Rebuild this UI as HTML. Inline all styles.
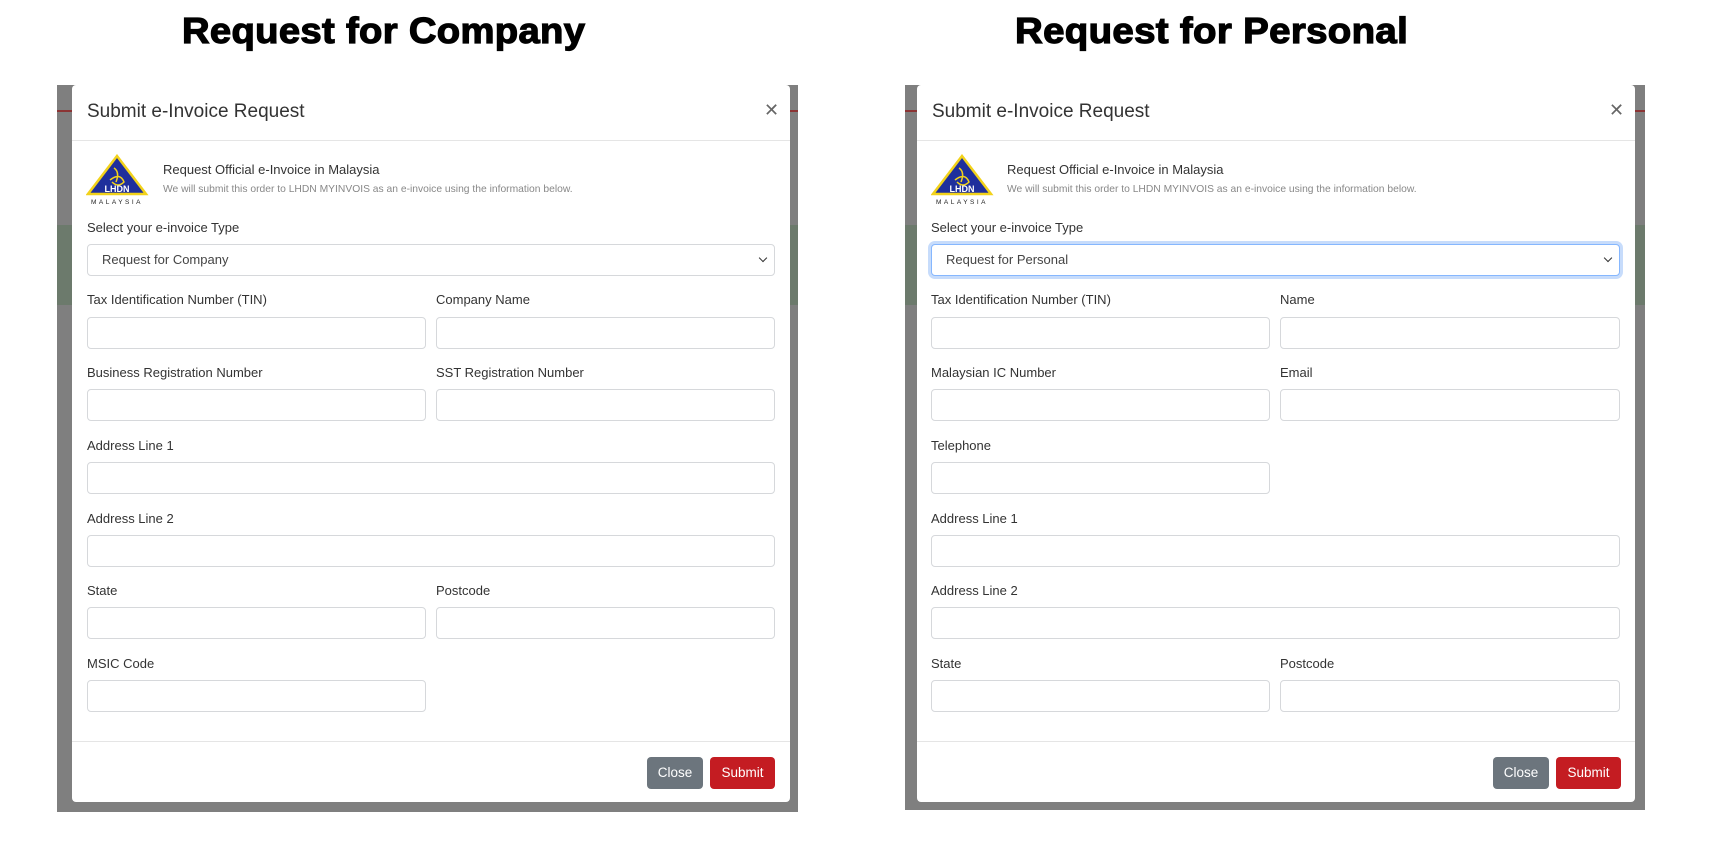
<!DOCTYPE html>
<html><head><meta charset="utf-8"><style>
*{box-sizing:border-box;margin:0;padding:0}
body{width:1711px;height:857px;background:#fff;position:relative;overflow:hidden;font-family:"Liberation Sans",Arial,sans-serif;color:#333}
.a{position:absolute}
.h{font-weight:bold;font-size:36px;color:#000;top:10px;white-space:nowrap;transform-origin:left top;letter-spacing:0.3px;-webkit-text-stroke:1.2px #000}
.bg{background:#7f7f7f}
.modal{background:#fff;border-radius:4px;top:85px;height:717px}
.t{font-size:19px;color:#333;top:101px}
.x{font-size:18px;color:#666;top:100px}
.hr{height:1px;background:#e5e5e5}
.lbl{font-size:13px;color:#333;white-space:nowrap}
.in{height:32px;border:1px solid #d6d8db;border-radius:4px;background:#fff}
.sub1{font-size:13px;color:#333;top:162px}
.sub2{font-size:10.3px;color:#888;top:184px}
.btn{height:32px;border-radius:4px;color:#fff;font-size:13.5px;text-align:center;line-height:32px;top:757px}
.c{background:#6c757d}.s{background:#c41c22}
.sel{font-size:13px;color:#444;padding-left:14px;line-height:30px}
.chev{position:absolute;right:8px;top:10px;width:6px;height:6px;border-right:1.6px solid #333;border-bottom:1.6px solid #333;transform:rotate(45deg)}
</style></head><body>

<div class="a h" style="left:182px;transform:scaleX(1.062)">Request for Company</div>
<div class="a h" style="left:1015px;transform:scaleX(1.068)">Request for Personal</div>

<!-- LEFT -->
<div class="a bg" style="left:57px;top:85px;width:741px;height:727px"></div>
<div class="a" style="left:57px;top:110px;width:741px;height:2px;background:#8b3434"></div>
<div class="a" style="left:57px;top:225px;width:741px;height:80px;background:#6c7a6c"></div>
<div class="a modal" style="left:72px;width:718px"></div>
<div class="a t" style="left:87px">Submit e-Invoice Request</div>
<div class="a x" style="left:764px">✕</div>
<div class="a hr" style="left:72px;top:140px;width:718px"></div>
<svg class="a" style="left:86px;top:154px" width="64" height="52" viewBox="0 0 64 52"><polygon points="31,2 60,40 2,40" fill="#1f2f9c" stroke="#f2d21b" stroke-width="2.5"/><path d="M28,14 q6,4 2,14 M24,26 q10,-8 14,2 q-6,6 -12,0" stroke="#f2d21b" stroke-width="1.5" fill="none"/><text x="31" y="38" font-size="9" fill="#fff" font-weight="bold" text-anchor="middle" font-family="Liberation Sans">LHDN</text><text x="31" y="50" font-size="6.5" fill="#222" text-anchor="middle" letter-spacing="2.5" font-family="Liberation Sans">MALAYSIA</text></svg>
<div class="a sub1" style="left:163px">Request Official e-Invoice in Malaysia</div>
<div class="a sub2" style="left:163px">We will submit this order to LHDN MYINVOIS as an e-invoice using the information below.</div>
<div class="a lbl" style="left:87px;top:220px">Select your e-invoice Type</div>
<div class="a in sel" style="left:87px;top:244px;width:688px">Request for Company<span class="chev"></span></div>
<div class="a lbl" style="left:87px;top:292px">Tax Identification Number (TIN)</div>
<div class="a lbl" style="left:436px;top:292px">Company Name</div>
<div class="a in" style="left:87px;top:317px;width:339px"></div>
<div class="a in" style="left:436px;top:317px;width:339px"></div>
<div class="a lbl" style="left:87px;top:365px">Business Registration Number</div>
<div class="a lbl" style="left:436px;top:365px">SST Registration Number</div>
<div class="a in" style="left:87px;top:389px;width:339px"></div>
<div class="a in" style="left:436px;top:389px;width:339px"></div>
<div class="a lbl" style="left:87px;top:438px">Address Line 1</div>
<div class="a in" style="left:87px;top:462px;width:688px"></div>
<div class="a lbl" style="left:87px;top:511px">Address Line 2</div>
<div class="a in" style="left:87px;top:535px;width:688px"></div>
<div class="a lbl" style="left:87px;top:583px">State</div>
<div class="a lbl" style="left:436px;top:583px">Postcode</div>
<div class="a in" style="left:87px;top:607px;width:339px"></div>
<div class="a in" style="left:436px;top:607px;width:339px"></div>
<div class="a lbl" style="left:87px;top:656px">MSIC Code</div>
<div class="a in" style="left:87px;top:680px;width:339px"></div>
<div class="a hr" style="left:72px;top:741px;width:718px"></div>
<div class="a btn c" style="left:647px;width:56px">Close</div>
<div class="a btn s" style="left:710px;width:65px">Submit</div>

<!-- RIGHT -->
<div class="a bg" style="left:905px;top:85px;width:740px;height:725px"></div>
<div class="a" style="left:905px;top:110px;width:740px;height:2px;background:#8b3434"></div>
<div class="a" style="left:905px;top:225px;width:740px;height:80px;background:#6c7a6c"></div>
<div class="a modal" style="left:917px;width:718px"></div>
<div class="a t" style="left:932px">Submit e-Invoice Request</div>
<div class="a x" style="left:1609px">✕</div>
<div class="a hr" style="left:917px;top:140px;width:718px"></div>
<svg class="a" style="left:931px;top:154px" width="64" height="52" viewBox="0 0 64 52"><polygon points="31,2 60,40 2,40" fill="#1f2f9c" stroke="#f2d21b" stroke-width="2.5"/><path d="M28,14 q6,4 2,14 M24,26 q10,-8 14,2 q-6,6 -12,0" stroke="#f2d21b" stroke-width="1.5" fill="none"/><text x="31" y="38" font-size="9" fill="#fff" font-weight="bold" text-anchor="middle" font-family="Liberation Sans">LHDN</text><text x="31" y="50" font-size="6.5" fill="#222" text-anchor="middle" letter-spacing="2.5" font-family="Liberation Sans">MALAYSIA</text></svg>
<div class="a sub1" style="left:1007px">Request Official e-Invoice in Malaysia</div>
<div class="a sub2" style="left:1007px">We will submit this order to LHDN MYINVOIS as an e-invoice using the information below.</div>
<div class="a lbl" style="left:931px;top:220px">Select your e-invoice Type</div>
<div class="a in sel" style="left:931px;top:244px;width:689px;border-color:#86b7fe;box-shadow:0 0 0 3px #c7dcfb">Request for Personal<span class="chev"></span></div>
<div class="a lbl" style="left:931px;top:292px">Tax Identification Number (TIN)</div>
<div class="a lbl" style="left:1280px;top:292px">Name</div>
<div class="a in" style="left:931px;top:317px;width:339px"></div>
<div class="a in" style="left:1280px;top:317px;width:340px"></div>
<div class="a lbl" style="left:931px;top:365px">Malaysian IC Number</div>
<div class="a lbl" style="left:1280px;top:365px">Email</div>
<div class="a in" style="left:931px;top:389px;width:339px"></div>
<div class="a in" style="left:1280px;top:389px;width:340px"></div>
<div class="a lbl" style="left:931px;top:438px">Telephone</div>
<div class="a in" style="left:931px;top:462px;width:339px"></div>
<div class="a lbl" style="left:931px;top:511px">Address Line 1</div>
<div class="a in" style="left:931px;top:535px;width:689px"></div>
<div class="a lbl" style="left:931px;top:583px">Address Line 2</div>
<div class="a in" style="left:931px;top:607px;width:689px"></div>
<div class="a lbl" style="left:931px;top:656px">State</div>
<div class="a lbl" style="left:1280px;top:656px">Postcode</div>
<div class="a in" style="left:931px;top:680px;width:339px"></div>
<div class="a in" style="left:1280px;top:680px;width:340px"></div>
<div class="a hr" style="left:917px;top:741px;width:718px"></div>
<div class="a btn c" style="left:1493px;width:56px">Close</div>
<div class="a btn s" style="left:1556px;width:65px">Submit</div>
</body></html>
